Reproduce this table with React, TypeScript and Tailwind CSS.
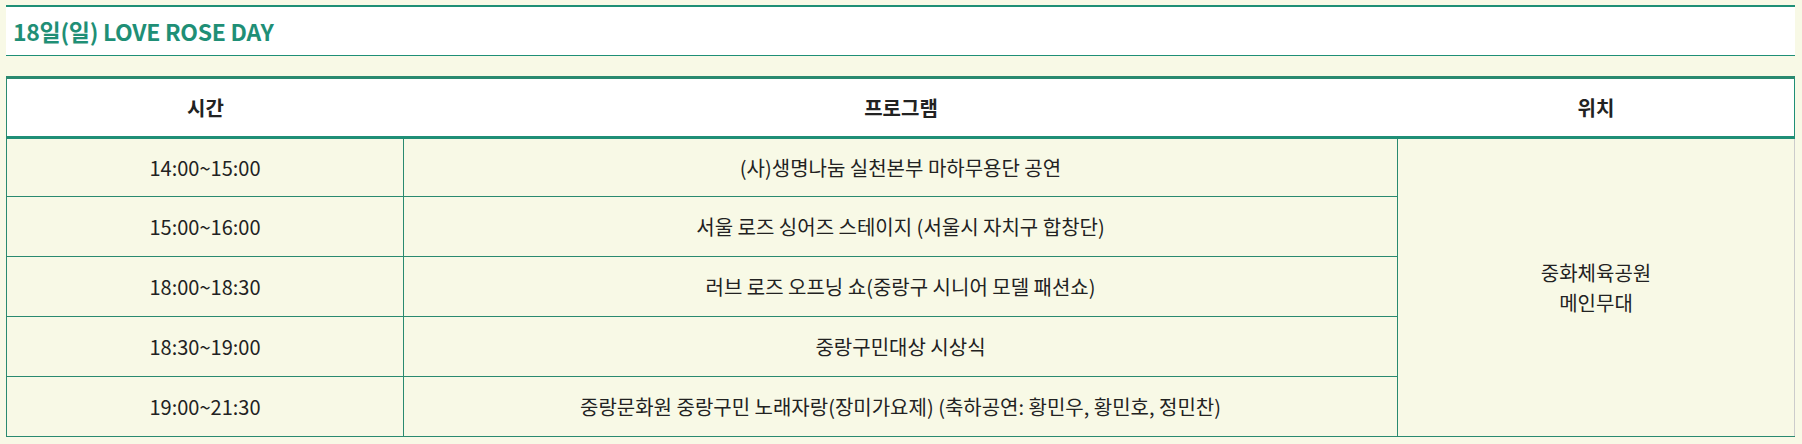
import React from 'react';

const font = { fontFamily: '"Noto Sans CJK KR", "Noto Sans", sans-serif' };

interface Session {
  time: string;
  program: string;
}

const sessions: Session[] = [
  { time: '14:00~15:00', program: '(사)생명나눔 실천본부 마하무용단 공연' },
  { time: '15:00~16:00', program: '서울 로즈 싱어즈 스테이지 (서울시 자치구 합창단)' },
  { time: '18:00~18:30', program: '러브 로즈 오프닝 쇼(중랑구 시니어 모델 패션쇼)' },
  { time: '18:30~19:00', program: '중랑구민대상 시상식' },
  { time: '19:00~21:30', program: '중랑문화원 중랑구민 노래자랑(장미가요제) (축하공연: 황민우, 황민호, 정민찬)' },
];

export default function App() {
  return (
    <div className="w-[1802px] h-[444px] bg-[#f8f9e6] pt-[5px] pl-[6px] overflow-hidden" style={font}>
      <div className="w-[1789px] h-[51px] bg-white border-t-2 border-b border-[#1f8f76] flex items-center pl-[7px]">
        <h2 className="text-[23px] font-bold text-[#1f8f76] tracking-[-0.3px]">18일(일) LOVE ROSE DAY</h2>
      </div>

      <div className="mt-[20px] w-[1789px] border-t-[3px] border-l border-b border-[#2a8a70] text-[#222]">
        <div className="grid grid-cols-[397px_994px_396px] h-[60px] bg-white border-b-[3px] border-r border-[#1f8f76] text-[20px] font-bold">
          <div className="flex items-center justify-center">시간</div>
          <div className="flex items-center justify-center">프로그램</div>
          <div className="flex items-center justify-center">위치</div>
        </div>

        <div className="grid grid-cols-[397px_994px_396px] grid-rows-[58px_60px_60px_60px_59px] border-r border-[#cccccc] text-[20px] leading-[30px]">
          {sessions.map((s, i) => (
            <React.Fragment key={s.time}>
              <div
                className={`flex items-center justify-center border-r border-[#2a8a70] ${i < sessions.length - 1 ? 'border-b' : ''}`}
                style={{ gridRow: i + 1, gridColumn: 1 }}
              >
                {s.time}
              </div>
              <div
                className={`flex items-center justify-center border-r border-[#2a8a70] ${i < sessions.length - 1 ? 'border-b' : ''}`}
                style={{ gridRow: i + 1, gridColumn: 2 }}
              >
                {s.program}
              </div>
            </React.Fragment>
          ))}
          <div className="col-start-3 row-start-1 row-span-5 flex flex-col items-center justify-center">
            <span>중화체육공원</span>
            <span>메인무대</span>
          </div>
        </div>
      </div>
    </div>
  );
}
